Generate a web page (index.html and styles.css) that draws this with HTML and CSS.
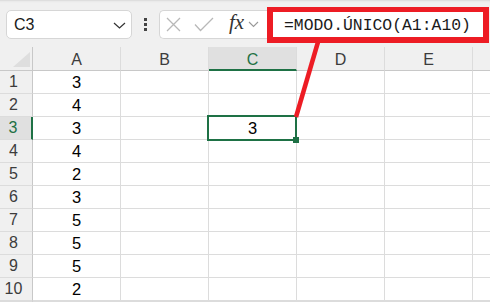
FILE: index.html
```html
<!DOCTYPE html>
<html lang="es">
<head>
    <meta charset="UTF-8">
    <meta name="viewport" content="width=device-width, initial-scale=1.0">
    <title>MODO.ÚNICO</title>
    <link rel="stylesheet" href="styles.css">
</head>
<body>
    <div class="toolbar">
        <div class="namebox">
            <span>C3</span>
            <svg class="chev" width="13" height="7" viewBox="0 0 13 7"><path d="M1 1 L6.5 6 L12 1" fill="none" stroke="#333" stroke-width="1.2"/></svg>
        </div>
        <div class="dots"><i></i><i></i><i></i></div>
        <div class="fxbtns">
            <svg width="15" height="15" viewBox="0 0 15 15"><path d="M1 1 L14 14 M14 1 L1 14" stroke="#b8b8b8" stroke-width="1.3"/></svg>
            <svg width="20" height="15" viewBox="0 0 20 15"><path d="M1 7.5 L6.5 13.5 L19 1" fill="none" stroke="#b8b8b8" stroke-width="1.3"/></svg>
            <span class="fx">fx</span>
            <svg width="11" height="7" viewBox="0 0 11 7"><path d="M1 1 L5.5 5.5 L10 1" fill="none" stroke="#999" stroke-width="1.1"/></svg>
        </div>
        <div class="formula">=MODO.ÚNICO(A1:A10)</div>
    </div>

    <div class="sheet">
        <div class="corner">
            <svg width="17" height="15" viewBox="0 0 17 15"><polygon points="17,0 17,15 0,15" fill="#dedede"/></svg>
        </div>
        <div class="colhead">A</div>
        <div class="colhead">B</div>
        <div class="colhead active">C</div>
        <div class="colhead">D</div>
        <div class="colhead">E</div>
        <div class="colhead last"></div>

        <div class="rowhead">1</div><div class="cell">3</div><div class="cell"></div><div class="cell"></div><div class="cell"></div><div class="cell"></div><div class="cell last"></div>
        <div class="rowhead">2</div><div class="cell">4</div><div class="cell"></div><div class="cell"></div><div class="cell"></div><div class="cell"></div><div class="cell last"></div>
        <div class="rowhead active">3</div><div class="cell">3</div><div class="cell"></div><div class="cell selected">3</div><div class="cell"></div><div class="cell"></div><div class="cell last"></div>
        <div class="rowhead">4</div><div class="cell">4</div><div class="cell"></div><div class="cell"></div><div class="cell"></div><div class="cell"></div><div class="cell last"></div>
        <div class="rowhead">5</div><div class="cell">2</div><div class="cell"></div><div class="cell"></div><div class="cell"></div><div class="cell"></div><div class="cell last"></div>
        <div class="rowhead">6</div><div class="cell">3</div><div class="cell"></div><div class="cell"></div><div class="cell"></div><div class="cell"></div><div class="cell last"></div>
        <div class="rowhead">7</div><div class="cell">5</div><div class="cell"></div><div class="cell"></div><div class="cell"></div><div class="cell"></div><div class="cell last"></div>
        <div class="rowhead">8</div><div class="cell">5</div><div class="cell"></div><div class="cell"></div><div class="cell"></div><div class="cell"></div><div class="cell last"></div>
        <div class="rowhead">9</div><div class="cell">5</div><div class="cell"></div><div class="cell"></div><div class="cell"></div><div class="cell"></div><div class="cell last"></div>
        <div class="rowhead">10</div><div class="cell">2</div><div class="cell"></div><div class="cell"></div><div class="cell"></div><div class="cell"></div><div class="cell last"></div>
        <div class="rowhead"></div><div class="cell"></div><div class="cell"></div><div class="cell"></div><div class="cell"></div><div class="cell"></div><div class="cell last"></div>
    </div>

    <!-- callout line from the formula box to C3 -->
    <svg class="callout" width="490" height="302" viewBox="0 0 490 302">
        <line x1="318" y1="42" x2="296" y2="117" stroke="#ed1c24" stroke-width="4.5"/>
    </svg>
</body>
</html>
```

FILE: styles.css
```css
/* General */
body {
    margin: 0;
    width: 490px;
    height: 302px;
    overflow: hidden;
    position: relative;
    background: #ffffff;
    font-family: 'Liberation Sans', Arial, sans-serif;
    color: #1a1a1a;
}

/* Toolbar / formula bar */
.toolbar {
    height: 47px;
    box-sizing: border-box;
    background: #f0f0f0;
    box-shadow: inset 0 3px 2px -2px #d8d8d8;
    display: flex;
    align-items: flex-start;
}

.namebox {
    margin: 10px 0 0 6px;
    width: 126px;
    height: 29px;
    box-sizing: border-box;
    background: #fff;
    border: 1px solid #d6d6d6;
    border-radius: 5px;
    display: flex;
    align-items: center;
    justify-content: space-between;
    padding: 0 5px 0 7px;
    font-size: 16px;
}

.namebox .chev {
    margin-top: 1px;
}

.dots {
    margin: 18px 0 0 12px;
    width: 3px;
    display: flex;
    flex-direction: column;
    gap: 2px;
}

.dots i {
    display: block;
    width: 3px;
    height: 3px;
    background: #444;
}

.fxbtns {
    margin: 10px 0 0 12px;
    width: 108px;
    height: 29px;
    box-sizing: border-box;
    background: #fff;
    border: 1px solid #d6d6d6;
    border-radius: 5px 0 0 5px;
    border-right: none;
    display: flex;
    align-items: center;
    padding-left: 6px;
}

.fxbtns svg:nth-child(2) {
    margin-left: 13px;
}

.fx {
    margin-left: 15px;
    font-family: 'Liberation Serif', 'Times New Roman', serif;
    font-style: italic;
    font-size: 21px;
    color: #333;
    margin-top: -4px;
}

.fxbtns svg:last-child {
    margin-left: 4px;
}

.formula {
    margin-top: 7px;
    width: 222px;
    height: 36px;
    box-sizing: border-box;
    background: #fff;
    border: solid #ed1c24;
    border-width: 5px 6px 6px 6px;
    font-family: 'Liberation Mono', 'Courier New', monospace;
    font-size: 16.4px;
    color: #1a1a1a;
    display: flex;
    align-items: center;
    padding: 2px 0 0 11px;
    white-space: nowrap;
}

/* Grid */
.sheet {
    height: 255px;
    display: grid;
    grid-template-columns: 33px repeat(5, 88px) 1fr;
    grid-template-rows: 24px repeat(10, 23px) 1fr;
    font-size: 16.5px;
}

.corner,
.colhead,
.rowhead,
.cell {
    box-sizing: border-box;
    display: flex;
    align-items: center;
    justify-content: center;
}

.corner {
    background: #f0f0f0;
    border-right: 1px solid #c8c8c8;
    border-bottom: 1px solid #c8c8c8;
    align-items: flex-end;
    justify-content: flex-end;
    padding: 0 2px 3px 0;
}

.colhead {
    background: #f0f0f0;
    border-right: 1px solid #dcdcdc;
    border-bottom: 1px solid #c8c8c8;
    font-size: 16px;
    color: #3c3c3c;
    padding-top: 3px;
}

.colhead.active {
    background: #e0e0e0;
    color: #1e7145;
    border-bottom: 2px solid #1e7145;
}

.rowhead {
    background: #f0f0f0;
    border-right: 1px solid #c8c8c8;
    border-bottom: 1px solid #dcdcdc;
    font-size: 16px;
    color: #3c3c3c;
    padding-right: 5px;
}

.rowhead.active {
    background: #e0e0e0;
    color: #1e7145;
    border-right: 2px solid #1e7145;
}

.cell {
    border-right: 1px solid #dcdcdc;
    border-bottom: 1px solid #dcdcdc;
    color: #000;
}

.cell.last,
.colhead.last {
    border-right: none;
}

.cell.selected {
    position: relative;
}

.cell.selected::after {
    content: "";
    position: absolute;
    top: -2px;
    left: -2px;
    right: -1px;
    bottom: -2px;
    border: 2px solid #1e7145;
}

.cell.selected::before {
    content: "";
    position: absolute;
    right: -3px;
    bottom: -4px;
    width: 6px;
    height: 6px;
    background: #1e7145;
    z-index: 1;
}

/* Callout */
.callout {
    position: absolute;
    top: 0;
    left: 0;
    pointer-events: none;
}
```
